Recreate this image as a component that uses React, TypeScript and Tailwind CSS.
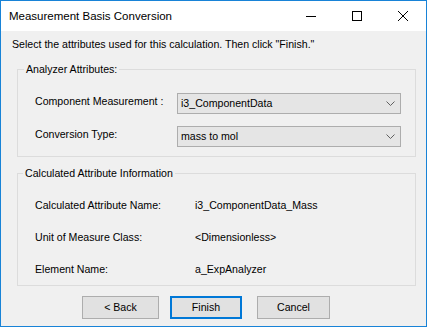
const ChevronDown = () => (
  <svg width="9" height="5" viewBox="0 0 9 5" className="text-[#606060]">
    <path d="M0.5 0.5 L4.5 4.5 L8.5 0.5" fill="none" stroke="currentColor" strokeWidth="1" />
  </svg>
);

const Combo = ({ value }: { value: string }) => (
  <div className="flex h-[21px] w-[224px] items-center justify-between border border-[#adadad] bg-[#e5e5e5] pl-[3px] pr-[5px]">
    <span>{value}</span>
    <ChevronDown />
  </div>
);

const App = () => {
  return (
    <div
      className="flex h-[327px] w-[427px] flex-col border border-[#1883d7] bg-[#f0f0f0] text-[10.6px] leading-[13px] text-black"
      style={{ fontFamily: '"Liberation Sans", Arial, sans-serif' }}
    >
      {/* Title bar */}
      <div className="flex h-[30px] items-center justify-between bg-white">
        <span className="pl-[8px] text-[11.5px]">Measurement Basis Conversion</span>
        <div className="flex h-full">
          <div className="flex w-[46px] items-center justify-center">
            <div className="h-px w-[10px] bg-black"></div>
          </div>
          <div className="flex w-[46px] items-center justify-center">
            <div className="h-[10px] w-[10px] border border-black"></div>
          </div>
          <div className="flex w-[46px] items-center justify-center">
            <svg width="10" height="10" viewBox="0 0 10 10">
              <path d="M0 0 L10 10 M10 0 L0 10" stroke="black" strokeWidth="1" />
            </svg>
          </div>
        </div>
      </div>

      {/* Body */}
      <div className="flex flex-1 flex-col">
        <p className="pl-[11px] pt-[7px]">Select the attributes used for this calculation. Then click "Finish."</p>

        <fieldset className="ml-[16px] mt-[12px] w-[399px] border border-[#dcdcdc] pb-[9px] pl-[17px] pt-[17px]">
          <legend className="ml-[-11px] px-[2px]">Analyzer Attributes:</legend>
          <div className="grid grid-cols-[142px_224px] gap-y-[12px]">
            <span className="pt-[2px]">Component Measurement :</span>
            <Combo value="i3_ComponentData" />
            <span className="pt-[2px]">Conversion Type:</span>
            <Combo value="mass to mol" />
          </div>
        </fieldset>

        <fieldset className="ml-[16px] mt-[10px] w-[399px] border border-[#dcdcdc] pb-[9px] pl-[17px] pt-[19px]">
          <legend className="ml-[-12px] px-[2px]">Calculated Attribute Information</legend>
          <div className="grid grid-cols-[160px_1fr] gap-y-[19px]">
            <span>Calculated Attribute Name:</span>
            <span>i3_ComponentData_Mass</span>
            <span>Unit of Measure Class:</span>
            <span>&lt;Dimensionless&gt;</span>
            <span>Element Name:</span>
            <span>a_ExpAnalyzer</span>
          </div>
        </fieldset>

        <div className="mt-[10px] flex pl-[81px]">
          <button className="h-[23px] w-[77px] border border-[#adadad] bg-[#e1e1e1]">&lt; Back</button>
          <button className="ml-[11px] h-[23px] w-[72px] border-2 border-[#0078d7] bg-[#e1e1e1]">Finish</button>
          <button className="ml-[15px] h-[23px] w-[73px] border border-[#adadad] bg-[#e1e1e1]">Cancel</button>
        </div>
      </div>
    </div>
  );
};

export default App;
